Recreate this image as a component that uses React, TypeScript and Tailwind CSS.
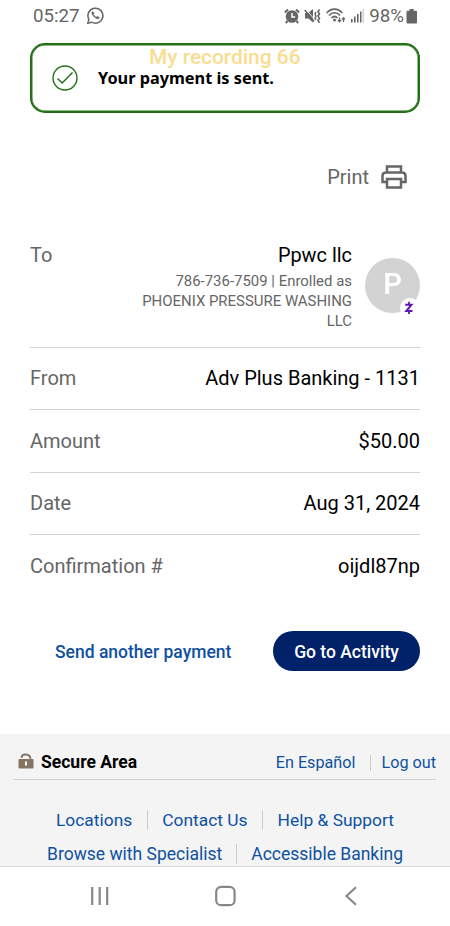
import React from 'react'

const details = [
  { label: 'From', value: 'Adv Plus Banking - 1131', row: 'h-[62px] border-b pb-[1px]' },
  { label: 'Amount', value: '$50.00', row: 'h-[63px] border-b pb-[1px]' },
  { label: 'Date', value: 'Aug 31, 2024', row: 'h-[62px] border-b pb-[1px]' },
  { label: 'Confirmation #', value: 'oijdl87np', row: 'h-[61px] pt-[1px]' },
]

function StatusBar() {
  return (
    <div className="flex h-[33px] shrink-0 items-center pl-[33px] pr-[32px] text-[#666]">
      <span className="text-[18.700px] leading-none">05:27</span>
      <svg className="ml-[7px] mt-[-2px]" width="17" height="17" viewBox="0 0 17 17" fill="none" stroke="currentColor">
        <path d="M.8 16.2 1.900 12.300A7.500 7.500 0 1 1 4.800 15.200Z" strokeWidth="1.500" />
        <path d="M5.600 4.400c-.8.7-.9 1.600-.4 2.700 1 2.200 2.600 3.800 4.800 4.600 1 .3 2-.1 2.400-1.100l-2.100-1.400-1.100 1C8 9.700 6.900 8.600 6.300 7.300l.9-1Z" fill="currentColor" strokeWidth=".6" />
      </svg>
      <div className="ml-auto flex items-center">
        {/* alarm */}
        <svg className="mt-[-1px]" width="16" height="16" viewBox="0 0 16 16">
          <circle cx="8" cy="8.500" r="6.300" fill="currentColor" />
          <path d="M.8 4.500 4 1.500M15.200 4.500 12 1.500M3.500 13 1.800 15M12.500 13l1.700 2" stroke="currentColor" strokeWidth="2" />
          <path d="M8 5v4h3.200" stroke="#fff" strokeWidth="1.500" fill="none" />
        </svg>
        {/* mute + vibrate */}
        <svg className="ml-[4px] mt-[-1px]" width="17" height="16" viewBox="0 0 17 16">
          <path d="M1 5h3l5-4v13.500L4.500 10.500H1Z" fill="currentColor" />
          <path d="M2.500 2 11 12" stroke="#fff" strokeWidth=".9" />
          <path d="M.8 2 10 13.500" stroke="currentColor" strokeWidth="1.600" />
          <path d="m15.500 1.500-1.500 2.200 1.500 2.200-1.500 2.200 1.500 2.200-1.500 2.200 1.500 2.200" stroke="currentColor" strokeWidth="1.600" fill="none" />
          <path d="m12 4.200-1 1.900 1 1.900-1 1.900 1 1.900" stroke="currentColor" strokeWidth="1.500" fill="none" />
        </svg>
        {/* wifi */}
        <svg className="ml-[5px] mt-[-1px]" width="20" height="16" viewBox="0 0 20 16" fill="none" stroke="currentColor">
          <path d="M.8 5C5-.2 12-.2 16.200 5M3 7.500c3.300-3.700 7.700-3.700 11 0M5.500 10c2-2 4-2 6 0" strokeWidth="1.700" />
          <circle cx="8.500" cy="12" r="1.500" fill="currentColor" stroke="none" />
          <path d="M13.500 9.500v4M17.500 14v-4" strokeWidth="1.400" />
          <path d="m11.200 12 2.300 2.700 2.300-2.700ZM15.200 11.500l2.300-2.700 2.300 2.700Z" fill="currentColor" stroke="none" />
        </svg>
        {/* signal */}
        <svg className="ml-[4px] mt-[-1px]" width="14" height="15" viewBox="0 0 14 15" fill="currentColor">
          <path d="M1 11h1.600v3.500H1ZM4 8.500h1.600v6H4ZM7 6h1.600v8.500H7ZM10 3.500h1.500v11H10Z" />
          <path d="M12.500 1H14v13.500h-1.500Z" opacity=".3" />
        </svg>
        <span className="ml-[5px] text-[18.800px] leading-none">98%</span>
        <svg className="ml-[2px] mt-[-1px]" width="12" height="16" viewBox="0 0 12 16" fill="currentColor">
          <path d="M3.500 1h4.200v1.700h2.300q1 0 1 1v10.800q0 1-1 1H1.500q-1 0-1-1V3.700q0-1 1-1h2Z" />
        </svg>
      </div>
    </div>
  )
}

function Payee() {
  return (
    <div className="flex h-[107px] border-b border-[#d3d3d3]">
      <span className="pt-[1px] text-[20px] leading-[26px] text-[#666]">To</span>
      <div className="ml-auto w-[225px] text-right">
        <div className="pt-[2px] text-[19.900px] leading-[26px]">Ppwc llc</div>
        <div className="mt-[2px] text-[14.950px] leading-[20px] text-[#666]">
          786-736-7509 | Enrolled as<br />
          <span className="whitespace-nowrap">PHOENIX PRESSURE WASHING</span><br />
          LLC
        </div>
      </div>
      <div className="relative ml-[13px] mt-[17px] flex size-[55px] items-center justify-center rounded-full bg-[#d3d3d3] pb-[2px] text-[29px] font-medium text-white">
        P
        <div className="absolute bottom-[-5px] right-0 flex size-[20px] items-center justify-center rounded-full bg-white">
          <svg className="ml-[-2px]" width="10" height="14" viewBox="0 0 10 14" fill="none" stroke="#6219b5">
            <path d="M1.200 3.700h6.300L2.300 10h6.200" strokeWidth="2" />
            <path d="M5 .8v2.200M5 10.800V13" strokeWidth="1.800" />
          </svg>
        </div>
      </div>
    </div>
  )
}

export default function App() {
  return (
    <div className="flex h-[926px] w-[450px] flex-col overflow-hidden bg-white font-['Roboto',sans-serif] text-black">
      <StatusBar />

      <main className="flex h-[701px] shrink-0 flex-col px-[30px] pt-[10px]">
        <div className="relative flex h-[70px] items-center rounded-[15px] border-2 border-[#247016] pl-[20px] shadow-[inset_0_0_0_0.5px_#247016]">
          <svg width="26" height="26" viewBox="0 0 26 26" fill="none" stroke="#247016">
            <circle cx="13" cy="13" r="12" strokeWidth="1.400" />
            <path d="m5.500 13.500 4.700 4.500L20.500 7.500" strokeWidth="1.500" />
          </svg>
          <span className="ml-[20px] font-['Noto_Sans',sans-serif] text-[16.300px] font-bold">Your payment is sent.</span>
          <span className="absolute left-[117px] top-0 whitespace-nowrap text-[20.900px] font-medium leading-[24px] text-[#f9dd90]">My recording 66</span>
        </div>

        <div className="mt-[51px] flex h-[26px] items-center justify-end pr-[13px] text-[#666]">
          <span className="text-[20px]">Print</span>
          <svg className="ml-[12px]" width="26" height="24" viewBox="0 0 26 24" fill="none" stroke="currentColor" strokeWidth="2.500">
            <path d="M6 7V1.500h14V7M6 17H1.500V11q0-3.500 3.500-3.500h16q3.500 0 3.500 3.500v6H20" />
            <path d="M6 14h14v8.500H6Z" />
          </svg>
        </div>

        <div className="mt-[51px]">
          <Payee />
          {details.map((item) => (
            <div key={item.label} className={`flex items-center justify-between border-[#d3d3d3] text-[20px] ${item.row}`}>
              <span className="text-[#666]">{item.label}</span>
              <span>{item.value}</span>
            </div>
          ))}
        </div>

        <div className="mt-[35px] flex items-center justify-between pl-[25px] text-[17.500px] font-medium">
          <button className="pt-[3px] text-[#0f519f]">Send another payment</button>
          <button className="h-[40px] w-[147px] rounded-full bg-[#012169] pt-[3px] text-white">Go to Activity</button>
        </div>
      </main>

      <footer className="h-[132px] shrink-0 bg-[#f4f4f4] px-[14px] text-[#0f519f]">
        <div className="flex h-[46px] items-center border-b border-[#d0d0d0] pl-[4px] pt-[11px]">
          <svg className="mt-[-2px]" width="16" height="16" viewBox="0 0 16 16">
            <path d="M3.500 4.800C4 .2 12 .2 12.500 5.800" fill="none" stroke="#857363" strokeWidth="1.900" />
            <rect x=".5" y="6" width="15" height="9.500" rx="1" fill="#857363" />
            <rect x="7" y="8.500" width="2" height="4" fill="#fff" />
          </svg>
          <span className="ml-[7px] pt-[1px] text-[17.500px] font-bold text-black">Secure Area</span>
          <a className="ml-auto pt-[2px] text-[16.200px]">En Español</a>
          <span className="ml-[15px] mr-[10px] mt-[2px] h-[16px] w-px bg-[#ccc]" />
          <a className="pt-[2px] text-[16.200px]">Log out</a>
        </div>
        <div className="mt-[23px] flex h-[34px] items-center justify-center text-[17.400px]">
          <a>Locations</a>
          <span className="mx-[14.500px] h-[20px] w-px bg-[#ccc]" />
          <a>Contact Us</a>
          <span className="mx-[14.500px] h-[20px] w-px bg-[#ccc]" />
          <a>Help &amp; Support</a>
        </div>
        <div className="flex h-[28px] items-center justify-center pt-[6px] text-[17.500px]">
          <a>Browse with Specialist</a>
          <span className="mx-[14px] h-[20px] w-px bg-[#ccc]" />
          <a>Accessible Banking</a>
        </div>
      </footer>

      <nav className="flex h-[60px] shrink-0 items-center justify-between border-t border-[#ddd] pb-[2px] pl-[90px] pr-[89px] text-[#888]">
        <svg width="20" height="20" viewBox="0 0 20 20" stroke="currentColor" strokeWidth="2.200">
          <path d="M2.200 1v18M9.700 1v18M17.200 1v18" />
        </svg>
        <svg width="22" height="22" viewBox="0 0 22 22" fill="none" stroke="currentColor" strokeWidth="2.200">
          <rect x="1.200" y="1.800" width="18.400" height="18.400" rx="5" />
        </svg>
        <svg width="20" height="20" viewBox="0 0 20 20" fill="none" stroke="currentColor" strokeWidth="2.200">
          <path d="M15 1.200 5.500 10l9.500 8.800" />
        </svg>
      </nav>
    </div>
  )
}
